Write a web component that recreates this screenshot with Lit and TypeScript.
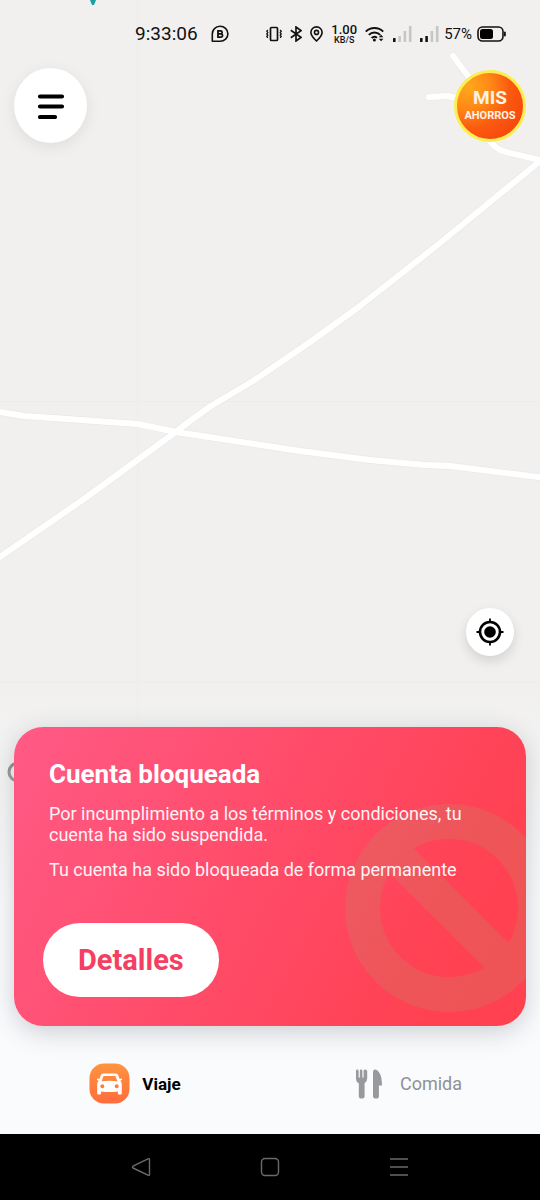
import { LitElement, html, css, svg } from "lit";
import { customElement, property } from "lit/decorators.js";

@customElement("map-canvas")
class MapCanvas extends LitElement {
  static styles = css`
    :host {
      display: block;
      overflow: hidden;
      background: #f1f0ef;
    }
    .tiles {
      display: block;
      width: 100%;
      height: 100%;
    }
  `;
  render() {
    const roads = [
      "M-6 561 L84 499 L173 434 L190 421 L211 406 L253 381 L313 340 L360 306 L440 243 L545 157",
      "M-6 411 L24 416 L138 424 L176 432 L300 451 L370 460 L425 465 L450 466 L546 478",
      "M453 56 L480 92",
      "M429 97 L447 96 L462 99",
      "M488 138 Q494 149 506 152 L544 161",
    ];
    return html`
      <svg class="tiles" viewBox="0 0 540 1134" preserveAspectRatio="xMidYMin slice" aria-hidden="true">
        <path d="M138 0V720M0 401.500H540M0 682H540" stroke="#ececeb" stroke-width="1" fill="none" />
        ${roads.map((d) => svg`<path d=${d} stroke="#e9e9e9" stroke-width="7.400" fill="none" stroke-linecap="round" stroke-linejoin="round" />`)}
        ${roads.map((d) => svg`<path d=${d} stroke="#fff" stroke-width="6" fill="none" stroke-linecap="round" stroke-linejoin="round" />`)}
        <path d="M90 0h6l-2 5h-2z" fill="#1b9ea6" />
        <circle cx="18" cy="772" r="9" fill="none" stroke="#5c5c5c" stroke-width="3" />
      </svg>
    `;
  }
}

@customElement("status-bar")
class StatusBar extends LitElement {
  static styles = css`
    :host {
      display: flex;
      align-items: center;
      height: 68px;
      padding: 0 34px 0 25%;
      box-sizing: border-box;
      font-family: Roboto, sans-serif;
      color: #111;
    }
    svg {
      display: block;
      flex: none;
    }
    .time {
      font-size: 19px;
      line-height: 24px;
      margin-right: 13px;
    }
    .group {
      display: flex;
      align-items: center;
      gap: 8px;
      margin-left: auto;
    }
    .levels {
      display: flex;
      align-items: center;
      gap: 5px;
    }
    .speed {
      display: grid;
      justify-items: center;
      font-weight: 500;
      font-size: 13px;
      line-height: 12px;
    }
    .unit {
      font-size: 9px;
      line-height: 8px;
    }
    .percent {
      font-size: 15px;
      line-height: 20px;
    }
  `;
  bars(lit: number) {
    return html`<svg width="22" height="16" viewBox="0 0 22 16">
      ${[4, 6, 11, 16].map(
        (h, i) => svg`<rect x=${3 + i * 5.3} y=${16 - h} width="2.6" height=${h} rx=".6" fill=${i < lit ? "#111" : "#c6c6c5"} />`
      )}
    </svg>`;
  }
  render() {
    return html`
      <span class="time">9:33:06</span>
      <svg width="18" height="18" viewBox="0 0 18 18" fill="none" stroke="#111" stroke-width="1.600">
        <path d="M1.3 16.3V9a7.8 7.5 0 1 1 7.8 7.3z" stroke-linejoin="round" />
        <path d="M7 5.9h2.6a1.5 1.5 0 0 1 0 3H7zM7 8.9h3a1.6 1.6 0 0 1 0 3.2H7z" stroke-width="1.800" />
      </svg>
      <div class="group">
        <svg width="16" height="16" viewBox="0 0 16 16" fill="none" stroke="#111">
          <rect x="4.5" y="1.5" width="7" height="13" rx="1" stroke-width="1.7" />
          <path d="M1.8 4 .8 5.3l1 1.3-1 1.3 1 1.3-1 1.3 1 1.3M14.2 4l1 1.3-1 1.3 1 1.3-1 1.3 1 1.3-1 1.3" stroke-width="1.3" />
        </svg>
        <svg width="12" height="16" viewBox="0 0 12 16" fill="none" stroke="#111" stroke-width="1.700">
          <path d="M.8 4.200 11 11.400 6 15V1L11 4.600.8 11.800" />
        </svg>
        <svg width="13" height="16" viewBox="0 0 13 16" fill="none" stroke="#111" stroke-width="1.6">
          <path d="M6.5 15C3.6 12.200.9 9.400.9 6.400a5.600 5.500 0 0 1 11.200 0C12.100 9.400 9.400 12.200 6.500 15z" />
          <circle cx="6.5" cy="6.4" r="2" />
        </svg>
        <span class="speed">1.00<span class="unit">KB/S</span></span>
        <div class="levels">
          <svg width="20" height="16" viewBox="0 0 20 16" fill="none" stroke="#111" stroke-width="2">
            <path d="M.8 5.600a12.300 12.300 0 0 1 17.400 0M3.800 8.900a8 8 0 0 1 11.400 0M6.600 12a4.200 4.200 0 0 1 5.400-.3" />
            <circle cx="9.4" cy="14" r="1.5" fill="#111" stroke="none" />
            <path d="m13.800 11.200 2.300-2.500 2.300 2.500zM13.800 12.800l2.300 2.500 2.300-2.500z" fill="#111" stroke="none" />
          </svg>
          ${this.bars(1)}${this.bars(2)}
          <span class="percent">57%</span>
          <svg width="29" height="16" viewBox="0 0 29 16">
            <rect x="1" y="1" width="25" height="14" rx="4.500" fill="none" stroke="#111" stroke-width="1.600" />
            <rect x="3" y="3" width="13" height="10" rx="2.500" fill="#000" />
            <rect x="27" y="5.500" width="1.800" height="5" rx=".9" fill="#111" />
          </svg>
        </div>
      </div>
    `;
  }
}

@customElement("blocked-card")
class BlockedCard extends LitElement {
  @property() heading = "";
  static styles = css`
    :host {
      display: block;
      position: relative;
      box-sizing: border-box;
      padding: 32px 35px 29px;
      border-radius: 29px;
      overflow: hidden;
      color: #fff;
      font-family: Roboto, sans-serif;
      background: linear-gradient(118deg, #ff5a86 0%, #ff4b68 48%, #ff4254 80%, #ff404f 100%);
    }
    .ban {
      position: absolute;
      right: -27px;
      bottom: 14px;
      width: 208px;
      height: 208px;
    }
    .content {
      position: relative;
    }
    h1 {
      margin: 0 0 14px;
      font-size: 26px;
      line-height: 30px;
      font-weight: 700;
    }
    p {
      margin: 0 0 14px;
      max-width: 416px;
      font-size: 18px;
      line-height: 21px;
      color: #fff3f5;
    }
    button {
      display: block;
      margin: 43px 0 0 -6px;
      height: 74px;
      padding: 0 35px;
      border: 0;
      border-radius: 37px;
      background: #fff;
      color: #f43f63;
      font: 700 29px/34px Roboto, sans-serif;
    }
  `;
  render() {
    return html`
      <svg class="ban" viewBox="0 0 208 208" aria-hidden="true">
        <g fill="none" stroke="rgb(175,160,105)" stroke-width="35" opacity=".2">
          <circle cx="104" cy="104" r="86.5" />
          <path d="M45 45 163 163" />
        </g>
      </svg>
      <div class="content">
        <h1>${this.heading}</h1>
        <p>Por incumplimiento a los términos y condiciones, tu cuenta ha sido suspendida.</p>
        <p>Tu cuenta ha sido bloqueada de forma permanente</p>
        <button type="button">Detalles</button>
      </div>
    `;
  }
}

@customElement("app-root")
class AppRoot extends LitElement {
  static styles = css`
    :host {
      display: flex;
      flex-direction: column;
      min-height: 100vh;
      font-family: Roboto, sans-serif;
      background: #f1f0ef;
    }
    button {
      border: 0;
      padding: 0;
      font-family: inherit;
      cursor: pointer;
    }
    svg {
      display: block;
    }
    .screen {
      position: relative;
      flex: 1;
      display: flex;
      flex-direction: column;
    }
    .map {
      position: absolute;
      inset: 0;
    }
    .layer {
      position: relative;
      flex: 1;
      display: flex;
      flex-direction: column;
    }
    .top {
      display: flex;
      justify-content: space-between;
      align-items: center;
      padding: 0 14px;
    }
    .round {
      display: grid;
      place-items: center;
      border-radius: 50%;
      background: #fff;
    }
    .menu {
      width: 73px;
      height: 75px;
      box-shadow: 0 4px 16px rgba(0, 0, 0, 0.08);
    }
    .savings {
      display: grid;
      align-content: center;
      justify-items: center;
      width: 72px;
      height: 72px;
      border: 3px solid #fbee55;
      border-radius: 50%;
      color: #fff3e6;
      font-weight: 700;
      font-size: 19px;
      line-height: 20px;
      background: radial-gradient(circle at 18% 22%, #ffa81c 0%, #ff8a16 28%, #fb5a10 55%, #f63a0c 100%);
    }
    .savings small {
      font-size: 11px;
      line-height: 15px;
    }
    .locate {
      width: 48px;
      height: 48px;
      margin: auto 26px 0 auto;
      box-shadow: 0 5px 12px rgba(0, 0, 0, 0.13);
    }
    .sheet {
      margin-top: 32px;
      padding-top: 39px;
      background: linear-gradient(rgba(250, 251, 253, 0), #fafbfd 220px);
    }
    .card {
      margin: 0 14px;
      box-shadow: 0 6px 26px rgba(40, 50, 60, 0.22);
    }
    .tabs {
      display: grid;
      grid-template-columns: 1fr 1fr;
      padding: 37px 0 30px;
    }
    .tab {
      display: flex;
      align-items: center;
      justify-content: center;
      gap: 12px;
      height: 41px;
      font-size: 18px;
      line-height: 22px;
      color: #8f9194;
      text-decoration: none;
    }
    .active {
      color: #000;
      font-size: 17px;
      font-weight: 700;
    }
    .system {
      display: flex;
      justify-content: center;
      gap: 89px;
      height: 66px;
      background: #000;
    }
    .key {
      display: grid;
      place-items: center;
      width: 40px;
      background: none;
    }
  `;
  render() {
    return html`
      <main class="screen">
        <map-canvas class="map"></map-canvas>
        <div class="layer">
          <status-bar></status-bar>
          <div class="top">
            <button class="round menu" type="button" aria-label="Menú">
              <svg width="28" height="26" viewBox="0 0 28 26" fill="none" stroke="#000" stroke-width="4.200" stroke-linecap="round">
                <path d="M3 3.500H25M3 13.500H25M3 24H18" />
              </svg>
            </button>
            <button class="savings" type="button">MIS<small>AHORROS</small></button>
          </div>
          <button class="round locate" type="button" aria-label="Mi ubicación">
            <svg width="28" height="28" viewBox="0 0 28 28" fill="none" stroke="#000">
              <circle cx="14" cy="14" r="10" stroke-width="2.600" />
              <circle cx="14" cy="14" r="5.800" fill="#000" stroke="none" />
              <path d="M14 .5V4M14 24v3.500M.5 14H4M24 14h3.500" stroke-width="1.800" />
            </svg>
          </button>
          <div class="sheet">
            <blocked-card class="card" heading="Cuenta bloqueada"></blocked-card>
            <nav class="tabs">
              <a class="tab active" href="#viaje" aria-current="page">
                <svg width="41" height="41" viewBox="0 0 41 41">
                  <defs>
                    <linearGradient id="orange" x1="0" y1="0" x2="0" y2="1">
                      <stop offset="0" stop-color="#ff9440" />
                      <stop offset="1" stop-color="#ff6c3c" />
                    </linearGradient>
                  </defs>
                  <rect x=".5" y=".5" width="40" height="40" rx="14.500" fill="url(#orange)" />
                  <path
                    fill="#fff"
                    fill-rule="evenodd"
                    d="M14.200 10.500h12.600q1.700 0 2.300 1.500l1.600 4 1.500-.5q1 0 .9 1-.2.900-1.800 1.300 1.500 1.400 1.500 3.500v9q0 1.200-1.200 1.200h-1.500q-1.200 0-1.200-1.200v-1.800q-8.400 1.200-16.800 0v1.800q0 1.200-1.200 1.200H9.400q-1.200 0-1.200-1.200v-9q0-2.100 1.500-3.500-1.600-.4-1.800-1.300-.1-1 .9-1l1.500.5 1.600-4q.6-1.500 2.300-1.500zM14.600 13l-2 5.200q7.900-1 15.800 0l-2-5.200zM13.300 21.200a2 2 0 1 0 .01 4 2 2 0 1 0 0-4zM27.700 21.200a2 2 0 1 0 .01 4 2 2 0 1 0 0-4z"
                  />
                </svg>
                Viaje
              </a>
              <a class="tab" href="#comida">
                <svg width="40" height="30" viewBox="0 0 40 30" fill="#97999c">
                  <path
                    d="M8 2q0-1.400 1.300-1.400T10.600 2v6q0 .7.600.7t.6-.7V2q0-1.400 1.300-1.400T14.400 2v6q0 .7.600.7t.6-.7V2q0-1.400 1.300-1.400T19.200 2v7.500q0 3.500-2.600 4.800v13q0 2.300-2.900 2.300t-2.900-2.300v-13Q8 13 8 9.500z"
                  />
                  <path d="M25 3q0-2.400 2.200-2.400 4.200.8 6.200 8.400l.7 7.600h-3.200v10.700q0 2.300-2.900 2.300t-3-2.300z" />
                </svg>
                Comida
              </a>
            </nav>
          </div>
        </div>
      </main>
      <footer class="system">
        <button class="key" type="button" aria-label="Atrás">
          <svg width="20" height="20" viewBox="0 0 20 20" fill="none" stroke="#6a6a6a" stroke-width="1.400" stroke-linejoin="round">
            <path d="M17.500 1.700q1-.3 1 .8v15q0 1.100-1 .8L2 11q-1-.9 0-1.800z" />
          </svg>
        </button>
        <button class="key" type="button" aria-label="Inicio">
          <svg width="20" height="20" viewBox="0 0 20 20" fill="none" stroke="#6a6a6a" stroke-width="1.400">
            <rect x="1.500" y="1.500" width="17" height="17" rx="3.500" />
          </svg>
        </button>
        <button class="key" type="button" aria-label="Recientes">
          <svg width="20" height="20" viewBox="0 0 20 20" fill="none" stroke="#6a6a6a" stroke-width="1.500">
            <path d="M1 2H19M1 10H19M1 18H19" />
          </svg>
        </button>
      </footer>
    `;
  }
}
